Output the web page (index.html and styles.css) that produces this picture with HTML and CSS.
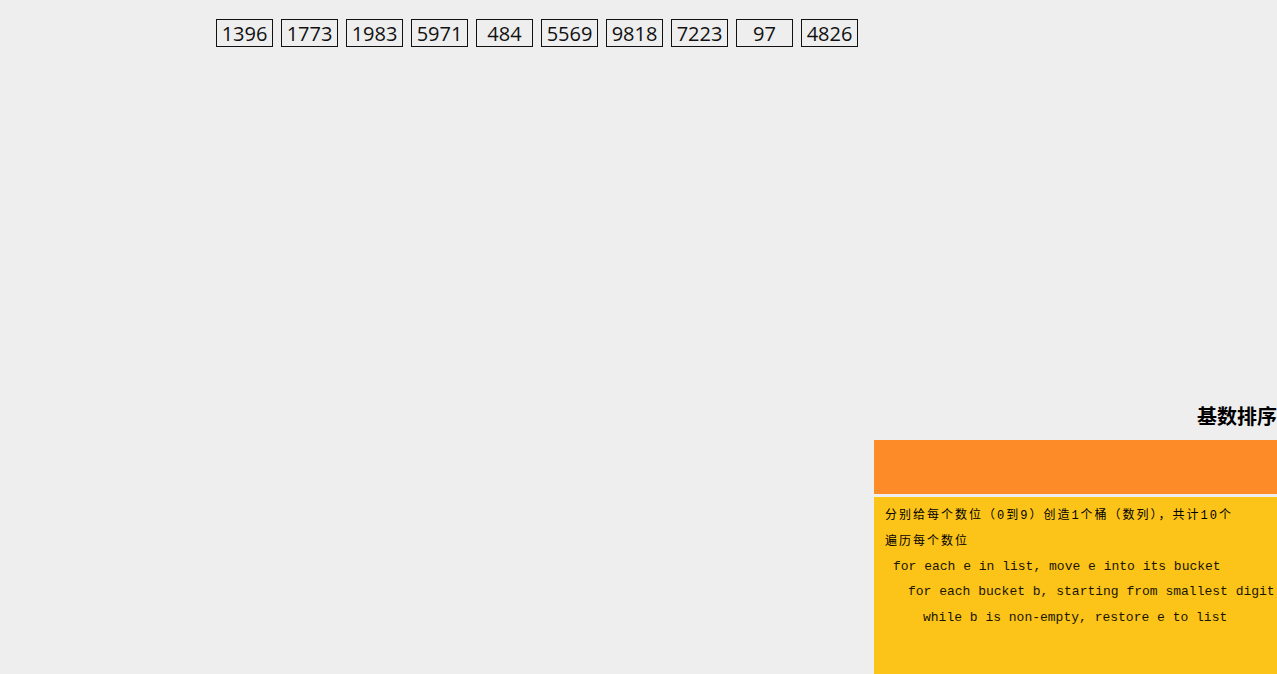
FILE: index.html
```html
<!DOCTYPE html>
<html lang="zh">
<head>
<meta charset="utf-8">
<title>基数排序</title>
<link rel="stylesheet" href="styles.css">
</head>
<body>
  <div class="numbers">
    <span class="num">1396</span>
    <span class="num">1773</span>
    <span class="num">1983</span>
    <span class="num">5971</span>
    <span class="num">484</span>
    <span class="num">5569</span>
    <span class="num">9818</span>
    <span class="num">7223</span>
    <span class="num">97</span>
    <span class="num">4826</span>
  </div>
  <div class="panel">
    <div class="title">基数排序</div>
    <div class="bar"></div>
    <div class="code">
      <div class="line cn">分别给每个数位（0到9）创造1个桶（数列），共计10个</div>
      <div class="line cn">遍历每个数位</div>
      <div class="line mono i1">for each e in list, move e into its bucket</div>
      <div class="line mono i2">for each bucket b, starting from smallest digit</div>
      <div class="line mono i3">while b is non-empty, restore e to list</div>
    </div>
  </div>
</body>
</html>
```
FILE: styles.css
```css
html, body {
  margin: 0;
  padding: 0;
}
body {
  background: #eeeeee;
  min-height: 100vh;
  display: flex;
  flex-direction: column;
  overflow: hidden;
  font-family: "Noto Sans", "Noto Sans CJK SC", sans-serif;
  color: #000;
}
.numbers {
  display: flex;
  gap: 8px;
  padding: 19px 0 0 216px;
}
.num {
  box-sizing: border-box;
  width: 57px;
  height: 28px;
  border: 1px solid #111;
  display: flex;
  align-items: center;
  justify-content: center;
  font-family: "Open Sans", "Noto Sans", sans-serif;
  font-size: 20px;
  color: #111;
}
.panel {
  margin-top: auto;
  align-self: flex-end;
  width: 403px;
  display: flex;
  flex-direction: column;
}
.title {
  height: 32px;
  line-height: 32px;
  margin-bottom: 8px;
  text-align: right;
  font-family: "Noto Sans CJK SC", sans-serif;
  font-weight: bold;
  font-size: 20px;
  white-space: nowrap;
}
.bar {
  height: 54px;
  background: #fd8c28;
  margin-bottom: 3px;
}
.code {
  height: 177px;
  background: #fcc418;
  padding: 7px 0 0 11px;
  box-sizing: border-box;
  overflow: hidden;
}
.line {
  height: 25.5px;
  line-height: 25.5px;
  white-space: nowrap;
}
.cn {
  font-family: "Liberation Mono", "Noto Sans CJK SC", monospace;
  font-size: 12px;
  letter-spacing: 2px;
}
.cn + .cn {
  height: 24px;
}
.mono {
  font-family: "Liberation Mono", monospace;
  font-size: 13px;
  color: #1a1400;
}
.i1 { padding-left: 8px; }
.i2 { padding-left: 23px; }
.i3 { padding-left: 38px; }
```
